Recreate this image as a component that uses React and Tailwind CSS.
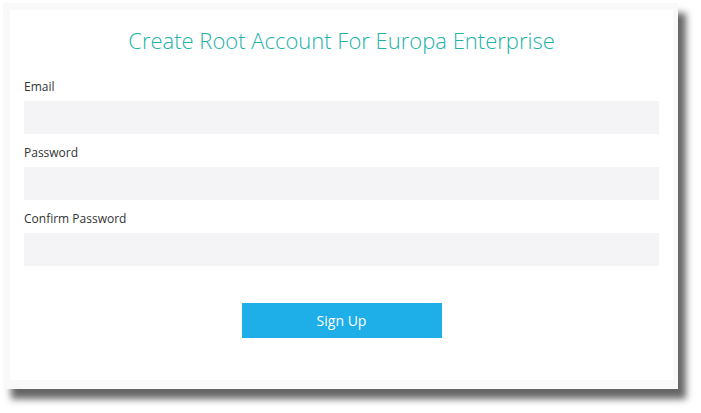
export default function App() {
  const fields = [
    { label: 'Email', type: 'email' },
    { label: 'Password', type: 'password' },
    { label: 'Confirm Password', type: 'password' },
  ];

  return (
    <div className="min-h-[413px] bg-white pt-[3px] pl-[3px] font-['Open_Sans',sans-serif]">
      <div className="w-[675px] h-[386px] bg-[#f9f9f9] pt-[7px] pl-[7px] shadow-[8px_10px_7px_rgba(0,0,0,0.6)]">
        <div className="w-[663px] h-[370px] bg-white px-[14px]">
          <h1 className="pt-[15px] text-center text-[22px] leading-[30px] font-light text-[#22b2a8]">
            Create Root Account For Europa Enterprise
          </h1>
          <form className="mt-[24px] flex flex-col" onSubmit={(e) => e.preventDefault()}>
            {fields.map((f, i) => (
              <div key={f.label} className={i > 0 ? 'mt-[11px]' : ''}>
                <label className="block text-[12px] leading-[16px] text-[#333]">{f.label}</label>
                <input
                  type={f.type}
                  className="mt-[6px] block w-full h-[33px] bg-[#f4f4f6] border-0 px-3 text-sm text-[#333] outline-none"
                />
              </div>
            ))}
            <div className="mt-[37px] flex justify-center">
              <button
                type="submit"
                className="w-[200px] h-[35px] bg-[#1eaee8] text-white text-[14px]"
              >
                Sign Up
              </button>
            </div>
          </form>
        </div>
      </div>
    </div>
  );
}
